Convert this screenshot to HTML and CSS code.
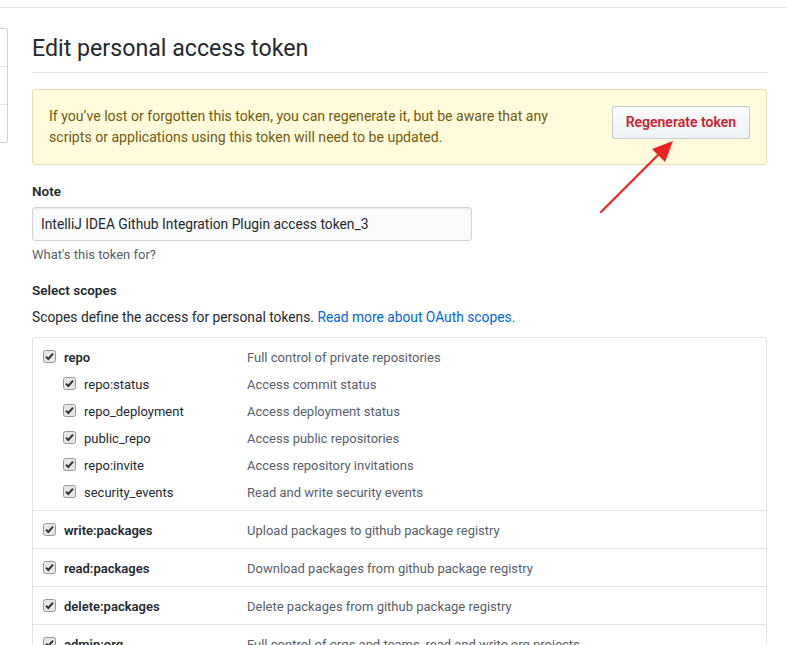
FILE: index.html
```html
<!DOCTYPE html>
<html lang="en">
<head>
<meta charset="utf-8">
<title>Edit personal access token</title>
<link rel="stylesheet" href="styles.css">
</head>
<body>
<div class="topbar"></div>
<div class="layout">
  <nav class="sidebar">
    <div class="side-item"></div>
    <div class="side-item"></div>
    <div class="side-item"></div>
  </nav>
  <main class="main">
    <h1 class="subhead">Edit personal access token</h1>
    <div class="flash">
      <p class="flash-text">If you’ve lost or forgotten this token, you can regenerate it, but be aware that any scripts or applications using this token will need to be updated.</p>
      <button class="btn-danger" type="button">Regenerate token</button>
    </div>

    <label class="field-label" for="note">Note</label>
    <input class="input" id="note" type="text" value="IntelliJ IDEA Github Integration Plugin access token_3">
    <p class="note">What's this token for?</p>

    <h2 class="field-label scopes-title">Select scopes</h2>
    <p class="scopes-desc">Scopes define the access for personal tokens. <a href="#" class="link">Read more about OAuth scopes.</a></p>

    <div class="scopes">
      <div class="scope-group">
        <div class="scope-item">
          <div class="scope-name top"><span class="cb"><svg viewBox="0 0 13 13" width="13" height="13"><rect x="0.5" y="0.5" width="12" height="12" rx="2" fill="#e6e6e6" stroke="#9a9a9a"/><path d="M3 6.6 L5.3 9 L10 3.6" fill="none" stroke="#333" stroke-width="2"/></svg></span>repo</div>
          <div class="scope-desc">Full control of private repositories</div>
        </div>
        <div class="scope-item">
          <div class="scope-name sub"><span class="cb"><svg viewBox="0 0 13 13" width="13" height="13"><rect x="0.5" y="0.5" width="12" height="12" rx="2" fill="#e6e6e6" stroke="#9a9a9a"/><path d="M3 6.6 L5.3 9 L10 3.6" fill="none" stroke="#333" stroke-width="2"/></svg></span>repo:status</div>
          <div class="scope-desc">Access commit status</div>
        </div>
        <div class="scope-item">
          <div class="scope-name sub"><span class="cb"><svg viewBox="0 0 13 13" width="13" height="13"><rect x="0.5" y="0.5" width="12" height="12" rx="2" fill="#e6e6e6" stroke="#9a9a9a"/><path d="M3 6.6 L5.3 9 L10 3.6" fill="none" stroke="#333" stroke-width="2"/></svg></span>repo_deployment</div>
          <div class="scope-desc">Access deployment status</div>
        </div>
        <div class="scope-item">
          <div class="scope-name sub"><span class="cb"><svg viewBox="0 0 13 13" width="13" height="13"><rect x="0.5" y="0.5" width="12" height="12" rx="2" fill="#e6e6e6" stroke="#9a9a9a"/><path d="M3 6.6 L5.3 9 L10 3.6" fill="none" stroke="#333" stroke-width="2"/></svg></span>public_repo</div>
          <div class="scope-desc">Access public repositories</div>
        </div>
        <div class="scope-item">
          <div class="scope-name sub"><span class="cb"><svg viewBox="0 0 13 13" width="13" height="13"><rect x="0.5" y="0.5" width="12" height="12" rx="2" fill="#e6e6e6" stroke="#9a9a9a"/><path d="M3 6.6 L5.3 9 L10 3.6" fill="none" stroke="#333" stroke-width="2"/></svg></span>repo:invite</div>
          <div class="scope-desc">Access repository invitations</div>
        </div>
        <div class="scope-item">
          <div class="scope-name sub"><span class="cb"><svg viewBox="0 0 13 13" width="13" height="13"><rect x="0.5" y="0.5" width="12" height="12" rx="2" fill="#e6e6e6" stroke="#9a9a9a"/><path d="M3 6.6 L5.3 9 L10 3.6" fill="none" stroke="#333" stroke-width="2"/></svg></span>security_events</div>
          <div class="scope-desc">Read and write security events</div>
        </div>
      </div>
      <div class="scope-group">
        <div class="scope-item">
          <div class="scope-name top"><span class="cb"><svg viewBox="0 0 13 13" width="13" height="13"><rect x="0.5" y="0.5" width="12" height="12" rx="2" fill="#e6e6e6" stroke="#9a9a9a"/><path d="M3 6.6 L5.3 9 L10 3.6" fill="none" stroke="#333" stroke-width="2"/></svg></span>write:packages</div>
          <div class="scope-desc">Upload packages to github package registry</div>
        </div>
      </div>
      <div class="scope-group">
        <div class="scope-item">
          <div class="scope-name top"><span class="cb"><svg viewBox="0 0 13 13" width="13" height="13"><rect x="0.5" y="0.5" width="12" height="12" rx="2" fill="#e6e6e6" stroke="#9a9a9a"/><path d="M3 6.6 L5.3 9 L10 3.6" fill="none" stroke="#333" stroke-width="2"/></svg></span>read:packages</div>
          <div class="scope-desc">Download packages from github package registry</div>
        </div>
      </div>
      <div class="scope-group">
        <div class="scope-item">
          <div class="scope-name top"><span class="cb"><svg viewBox="0 0 13 13" width="13" height="13"><rect x="0.5" y="0.5" width="12" height="12" rx="2" fill="#e6e6e6" stroke="#9a9a9a"/><path d="M3 6.6 L5.3 9 L10 3.6" fill="none" stroke="#333" stroke-width="2"/></svg></span>delete:packages</div>
          <div class="scope-desc">Delete packages from github package registry</div>
        </div>
      </div>
      <div class="scope-group">
        <div class="scope-item">
          <div class="scope-name top"><span class="cb"><svg viewBox="0 0 13 13" width="13" height="13"><rect x="0.5" y="0.5" width="12" height="12" rx="2" fill="#e6e6e6" stroke="#9a9a9a"/><path d="M3 6.6 L5.3 9 L10 3.6" fill="none" stroke="#333" stroke-width="2"/></svg></span>admin:org</div>
          <div class="scope-desc">Full control of orgs and teams, read and write org projects</div>
        </div>
      </div>
    </div>
  </main>
</div>
<svg class="arrow" width="90" height="90" viewBox="0 0 90 90">
  <line x1="6" y1="77" x2="66" y2="17" stroke="#ee2222" stroke-width="2.2" stroke-linecap="round"/>
  <polygon points="78,6 70,27 57,14" fill="#ee2222"/>
</svg>
</body>
</html>
```

FILE: styles.css
```css
html, body {
  margin: 0;
  padding: 0;
  background: #fff;
}
body {
  font-family: Roboto, "Liberation Sans", Arial, sans-serif;
  font-size: 14px;
  color: #24292e;
  overflow: hidden;
  height: 645px;
  position: relative;
}
.topbar {
  height: 7px;
  border-bottom: 1px solid #e1e4e8;
}
.layout {
  display: flex;
  padding-right: 20px;
}
.sidebar {
  width: 7px;
  flex: none;
  margin-top: 20px;
  border: 1px solid #d1d5da;
  border-left: none;
  border-radius: 0 3px 3px 0;
  align-self: flex-start;
}
.side-item {
  height: 37px;
  border-bottom: 1px solid #e1e4e8;
}
.side-item:last-child {
  border-bottom: none;
  height: 37px;
}
.main {
  flex: 1;
  margin-left: 24px;
  min-width: 0;
}
.subhead {
  margin: 22px 0 16px;
  font-size: 23.2px;
  font-weight: 400;
  line-height: 36px;
  padding-bottom: 6px;
  border-bottom: 1px solid #e1e4e8;
  color: #24292e;
}
.flash {
  display: flex;
  justify-content: space-between;
  align-items: flex-start;
  padding: 16px;
  background: #fffbdd;
  border: 1px solid #e6ddb3;
  border-radius: 3px;
}
.flash-text {
  margin: 0;
  max-width: 520px;
  font-size: 14.1px;
  line-height: 21px;
  color: #735c0f;
}
.btn-danger {
  font-family: inherit;
  font-size: 14px;
  font-weight: 600;
  color: #cb2431;
  line-height: 19px;
  padding: 6px 13px;
  background: linear-gradient(#fafbfc, #eff3f6 90%);
  border: 1px solid rgba(27, 31, 35, 0.2);
  border-radius: 3px;
  flex: none;
}
.field-label {
  display: block;
  margin: 16px 0 6px;
  font-size: 13.5px;
  font-weight: 600;
  line-height: 20px;
}
.input {
  display: block;
  box-sizing: border-box;
  width: 440px;
  height: 34px;
  padding: 0 8px;
  font-family: inherit;
  font-size: 13.8px;
  color: #24292e;
  background: #fafbfc;
  border: 1px solid #d1d5da;
  border-radius: 3px;
  box-shadow: inset 0 1px 2px rgba(27, 31, 35, 0.075);
}
.note {
  margin: 5px 0 0;
  font-size: 13px;
  line-height: 18px;
  color: #586069;
}
.scopes-title {
  margin: 16px 0 7px;
}
.scopes-desc {
  margin: 0 0 10px;
  line-height: 20px;
  font-size: 13.8px;
}
.link {
  color: #0366d6;
  text-decoration: none;
}
.scopes {
  border: 1px solid #e1e4e8;
  border-radius: 3px;
}
.scope-group {
  padding: 6px 10px 4px;
  border-top: 1px solid #e1e4e8;
}
.scope-group:first-child {
  border-top: none;
}
.scope-item {
  display: flex;
  align-items: center;
  height: 27px;
}
.scope-name {
  width: 204px;
  flex: none;
  display: flex;
  align-items: center;
  gap: 8px;
  font-size: 13px;
  box-sizing: border-box;
}
.scope-name.top {
  font-weight: 600;
}
.scope-name.sub {
  padding-left: 20px;
}
.cb {
  display: flex;
  width: 13px;
  height: 13px;
  margin-top: -3px;
}
.scope-desc {
  font-size: 13px;
  color: #586069;
}
.arrow {
  position: absolute;
  left: 595px;
  top: 135px;
}
```
